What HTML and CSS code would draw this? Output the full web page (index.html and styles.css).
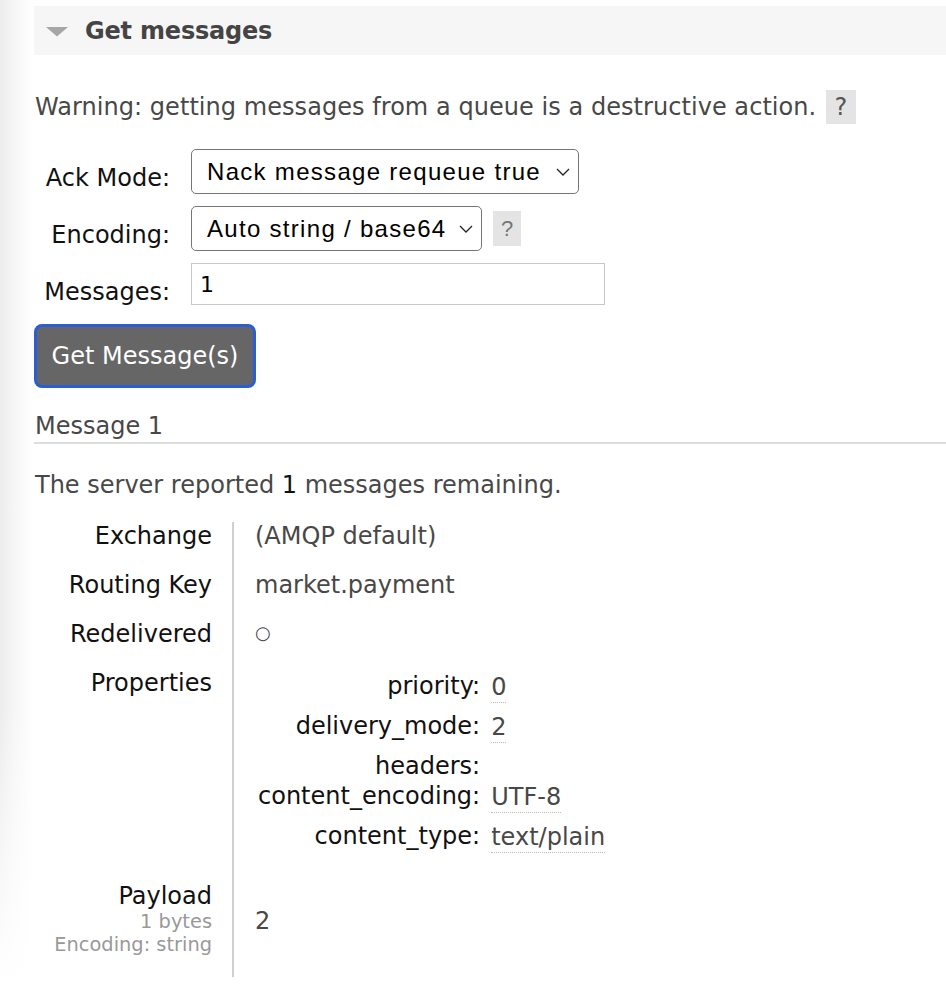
FILE: index.html
```html
<!DOCTYPE html>
<html lang="en">
<head>
<meta charset="utf-8">
<title>Get messages</title>
<link rel="stylesheet" href="styles.css">
</head>
<body>
<div class="section">
  <h2 class="section-title">
    <svg class="toggle" width="22" height="10" viewBox="0 0 22 10"><polygon points="0,0 22,0 11,9.5" fill="#a6a6a6"/></svg>
    <span>Get messages</span>
  </h2>
  <div class="section-body">
    <p class="warning">Warning: getting messages from a queue is a destructive action. <span class="help">?</span></p>
    <form class="get-form">
      <label class="form-label">Ack Mode:</label>
      <div class="field">
        <div class="select-wrap select-ack">
          <select class="select"><option>Nack message requeue true</option></select>
          <svg class="chev" width="14" height="8" viewBox="0 0 14 8"><polyline points="1,1 7,7 13,1" fill="none" stroke="#222" stroke-width="1.3"/></svg>
        </div>
      </div>
      <label class="form-label">Encoding:</label>
      <div class="field">
        <div class="select-wrap select-enc">
          <select class="select"><option>Auto string / base64</option></select>
          <svg class="chev" width="14" height="8" viewBox="0 0 14 8"><polyline points="1,1 7,7 13,1" fill="none" stroke="#222" stroke-width="1.3"/></svg>
        </div>
        <span class="help help-sm">?</span>
      </div>
      <label class="form-label">Messages:</label>
      <div class="field">
        <input class="text-input" type="text" value="1">
      </div>
    </form>
    <button class="btn" type="button">Get Message(s)</button>

    <h3 class="msg-title">Message 1</h3>
    <p class="summary">The server reported <span class="num">1</span> messages remaining.</p>

    <table class="facts">
      <tr><th>Exchange</th><td>(AMQP default)</td></tr>
      <tr><th>Routing Key</th><td>market.payment</td></tr>
      <tr><th>Redelivered</th><td class="circle-cell">○</td></tr>
      <tr><th>Properties</th>
        <td class="props-cell">
          <table class="props">
            <tr><th>priority:</th><td><span class="val">0</span></td></tr>
            <tr><th>delivery_mode:</th><td><span class="val">2</span></td></tr>
            <tr class="short"><th>headers:</th><td></td></tr>
            <tr><th>content_encoding:</th><td><span class="val">UTF-8</span></td></tr>
            <tr><th>content_type:</th><td><span class="val">text/plain</span></td></tr>
          </table>
        </td>
      </tr>
      <tr class="payload-row"><th>Payload<div class="sub">1 bytes</div><div class="sub">Encoding: string</div></th><td class="payload">2</td></tr>
    </table>
  </div>
</div>
</body>
</html>
```
FILE: styles.css
```css
html, body {
  min-height: 100%;
}
body {
  margin: 0;
  min-height: 1004px;
  font-family: "DejaVu Sans", Verdana, sans-serif;
  font-size: 24px;
  color: #484848;
  background:
    linear-gradient(to bottom, rgba(255,255,255,0) 70%, #fff 98%),
    linear-gradient(to right, #ececec 0, #f6f6f6 14px, #fff 34px);
}
.section {
  margin-left: 34px;
  padding-top: 6px;
}
.section-title {
  margin: 0;
  height: 49px;
  display: flex;
  align-items: center;
  padding-left: 12px;
  background: #f6f6f6;
  font-size: 24px;
  font-weight: bold;
  color: #444;
  letter-spacing: -0.2px;
}
.toggle {
  margin-right: 17px;
  margin-top: 2px;
}
.warning {
  margin: 35px 0 0 1px;
  line-height: 34px;
  letter-spacing: 0.05px;
}
.help {
  display: inline-block;
  width: 30px;
  height: 34px;
  margin-left: 2px;
  line-height: 34px;
  text-align: center;
  background: #e4e4e4;
  color: #555;
  vertical-align: top;
}
.get-form {
  margin-top: 25px;
  display: grid;
  grid-template-columns: 136px auto;
  column-gap: 21px;
  row-gap: 12px;
  align-items: start;
}
.form-label {
  text-align: right;
  color: #111;
  padding-top: 14px;
  line-height: 30px;
}
.field {
  display: flex;
  align-items: center;
  gap: 11px;
}
.select-wrap {
  position: relative;
  display: inline-block;
}
.select {
  appearance: none;
  -webkit-appearance: none;
  height: 45px;
  margin: 0;
  padding: 0 30px 0 15px;
  border: 1px solid #767676;
  border-radius: 5px;
  background: #fff;
  font-family: "Liberation Sans", Arial, sans-serif;
  font-size: 24px;
  letter-spacing: 1.3px;
  color: #000;
}
.select-ack .select { width: 388px; }
.select-enc .select { width: 291px; }
.chev {
  position: absolute;
  right: 9px;
  top: 19px;
  pointer-events: none;
}
.help-sm {
  width: 28px;
  height: 35px;
  margin-left: 0;
  line-height: 35px;
  font-family: "Liberation Sans", Arial, sans-serif;
  font-size: 22px;
  color: #777;
}
.text-input {
  box-sizing: border-box;
  width: 414px;
  height: 42px;
  margin: 0;
  padding: 0 8px;
  border: 1px solid #c8c8c8;
  font-family: "DejaVu Sans", Verdana, sans-serif;
  font-size: 22px;
  color: #000;
  outline: none;
}
.btn {
  display: block;
  margin-top: 17px;
  box-sizing: border-box;
  width: 222px;
  height: 64px;
  padding: 0;
  border: 3px solid #2a5fd4;
  border-radius: 8px;
  background: #666;
  color: #fff;
  font-family: "DejaVu Sans", Verdana, sans-serif;
  font-size: 24px;
}
.msg-title {
  margin: 22px 0 0;
  padding: 0 0 0 1px;
  font-weight: normal;
  font-size: 24px;
  line-height: 32px;
  border-bottom: 2px solid #ddd;
}
.summary {
  margin: 25px 0 0 1px;
  line-height: 32px;
}
.num {
  color: #111;
}
.facts {
  margin-top: 21px;
  border-collapse: collapse;
}
.facts > tbody > tr > th {
  width: 178px;
  padding: 0 20px 21px 0;
  text-align: right;
  vertical-align: top;
  font-weight: normal;
  color: #111;
  line-height: 28px;
}
.facts > tbody > tr > td {
  padding: 0 0 21px 21px;
  border-left: 2px solid #d0d0d0;
  vertical-align: top;
  line-height: 28px;
}
.facts > tbody > tr > td.circle-cell {
  font-size: 18px;
  padding-top: 0;
  line-height: 26px;
}
.facts > tbody > tr > td.props-cell {
  padding-top: 2px;
  padding-left: 24px;
}
.props {
  border-collapse: collapse;
}
.props th {
  padding: 0;
  text-align: right;
  font-weight: normal;
  color: #111;
  line-height: 30px;
  vertical-align: top;
  white-space: nowrap;
}
.props td {
  padding: 2px 0 10px 11px;
  line-height: 28px;
  vertical-align: top;
}
.props .short td {
  padding: 0;
}
.val {
  border-bottom: 1px dotted #bbb;
  padding-bottom: 1px;
}
.sub {
  font-size: 19.4px;
  line-height: 23px;
  color: #999;
}
.facts > tbody > tr > td.payload {
  padding-top: 25px;
}
```
